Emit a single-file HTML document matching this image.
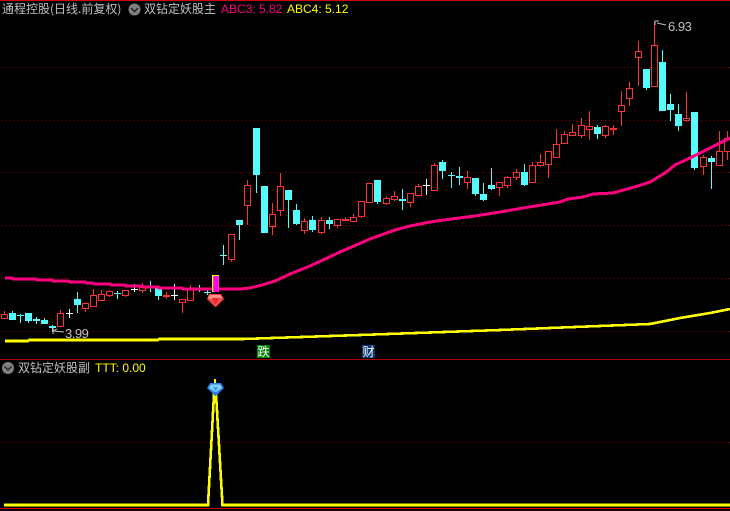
<!DOCTYPE html>
<html>
<head>
<meta charset="utf-8">
<style>
html,body{margin:0;padding:0;background:#000;}
#r{position:relative;width:730px;height:511px;background:#000;overflow:hidden;font:12px/14px "Liberation Sans","WenQuanYi Zen Hei","Noto Sans CJK SC",sans-serif;color:#c0c0c0;}
#r span{position:absolute;white-space:nowrap;}
svg{position:absolute;left:0;top:0;}
.c{font-family:"WenQuanYi Zen Hei","Noto Sans CJK SC",sans-serif;}
.n{font-size:13px;letter-spacing:-.5px;}
</style>
</head>
<body>
<div id="r">
<svg width="730" height="511" viewBox="0 0 730 511">
<g shape-rendering="crispEdges">
<rect x="0" y="0" width="730" height="1" fill="#c80000"/>
<rect x="0" y="359" width="730" height="1" fill="#a80000"/>
<g stroke="#960000" stroke-width="1" stroke-dasharray="1 3" fill="none">
<path d="M1 67.5H730M1 120.5H730M1 172.5H730M1 225.5H730M1 278.5H730M1 331.5H730M1 442.5H730"/>
</g>
<path fill="none" stroke="#ff3232" stroke-width="1" d="
M1.5 314.5h6v4h-6zM4.5 311V314
M57.5 313.5h6v13h-6zM60.5 310V313
M82.5 303.5h6v5h-6zM85.5 308V312
M90.5 295.5h6v11h-6zM93.5 289V295
M98.5 294.5h6v6h-6zM101.5 290V294
M106.5 291.5h6v4h-6zM109.5 290V291M109.5 295V297
M122.5 290.5h6v5h-6zM125.5 295V297
M139.5 287.5h6v3h-6zM142.5 283V287M142.5 290V293
M179.5 299.5h6v3h-6zM182.5 302V313
M187.5 288.5h6v12h-6zM190.5 285V288
M228.5 234.5h6v25h-6zM231.5 259V262
M244.5 185.5h6v20h-6zM247.5 180V185M247.5 205V225
M269.5 214.5h6v12h-6zM272.5 203V214M272.5 226V235
M277.5 186.5h6v24h-6zM280.5 173V186M280.5 210V216
M301.5 221.5h6v9h-6zM304.5 218V221M304.5 230V234
M318.5 220.5h6v12h-6zM321.5 217V220M321.5 232V234
M334.5 219.5h6v6h-6zM337.5 225V228
M350.5 217.5h6v4h-6zM353.5 214V217M353.5 221V222
M358.5 201.5h6v15h-6zM361.5 216V218
M366.5 183.5h6v19h-6z
M383.5 198.5h6v5h-6zM386.5 196V198M386.5 203V205
M391.5 196.5h6v3h-6zM394.5 191V196M394.5 199V201
M407.5 193.5h6v9h-6zM410.5 202V207
M415.5 186.5h6v9h-6zM418.5 184V186
M431.5 165.5h6v25h-6zM434.5 163V165
M464.5 177.5h6v5h-6zM467.5 171V177M467.5 182V189
M496.5 182.5h6v5h-6zM499.5 187V196
M504.5 177.5h6v8h-6zM507.5 176V177M507.5 185V188
M513.5 172.5h6v5h-6zM516.5 169V172M516.5 177V180
M529.5 165.5h6v17h-6zM532.5 162V165
M537.5 162.5h6v3h-6zM540.5 154V162M540.5 165V167
M545.5 151.5h6v13h-6zM548.5 164V178
M553.5 144.5h6v13h-6zM556.5 129V144M556.5 157V158
M561.5 134.5h6v9h-6zM564.5 131V134M564.5 143V144
M569.5 132.5h6v3h-6zM572.5 124V132
M578.5 125.5h6v10h-6zM581.5 118V125M581.5 135V138
M586.5 126.5h6v3h-6zM589.5 111V126M589.5 129V140
M602.5 126.5h6v9h-6zM605.5 125V126M605.5 135V138
M618.5 105.5h6v6h-6zM621.5 91V105M621.5 111V126
M626.5 88.5h6v10h-6zM629.5 82V88M629.5 98V106
M635.5 51.5h6v6h-6zM638.5 41V51M638.5 57V86
M651.5 45.5h6v41h-6zM654.5 22V45
M683.5 118.5h6v2h-6zM686.5 92V118M686.5 120V122
M700.5 157.5h6v9h-6zM703.5 155V157M703.5 166V175
M716.5 151.5h6v14h-6zM719.5 131V151
M724.5 138.5h6v13h-6zM727.5 131V138M727.5 151V160"/>
<path fill="#ff3232" d="M163 295h7v2h-7zM166 292h1v7h-1zM342 219h7v2h-7zM345 217h1v3h-1zM610 128h7v2h-7zM613 125h1v10h-1z"/>
<path fill="#54fcfc" d="
M9 313h7v7h-7zM12 311h1v9h-1z
M25 313h7v8h-7zM28 321h1v2h-1z
M33 319h7v2h-7zM36 317h1v7h-1z
M41 320h7v4h-7zM44 318h1v2h-1z
M49 326h7v2h-7zM52 325h1v7h-1z
M74 299h7v6h-7zM77 292h1v21h-1z
M155 288h7v8h-7zM158 296h1v4h-1z
M236 220h7v5h-7zM239 225h1v15h-1z
M253 128h7v47h-7zM256 175h1v18h-1z
M261 186h7v47h-7z
M285 190h7v10h-7zM288 200h1v28h-1z
M293 210h7v14h-7zM296 204h1v21h-1z
M309 220h7v10h-7zM312 216h1v16h-1z
M326 220h7v4h-7zM329 217h1v12h-1z
M374 180h7v22h-7zM377 202h1v2h-1z
M399 199h7v2h-7zM402 189h1v21h-1z
M439 162h7v9h-7zM442 160h1v19h-1z
M456 176h7v2h-7zM459 167h1v18h-1z
M472 178h7v16h-7zM475 194h1v2h-1z
M480 194h7v6h-7zM483 183h1v18h-1z
M488 185h7v4h-7zM491 168h1v22h-1z
M521 172h7v13h-7zM524 164h1v22h-1z
M594 127h7v7h-7zM597 125h1v14h-1z
M643 69h7v19h-7zM646 88h1v2h-1z
M659 62h7v49h-7zM662 50h1v12h-1z
M667 104h7v6h-7zM670 94h1v27h-1z
M675 114h7v12h-7zM678 104h1v27h-1z
M691 112h7v56h-7zM694 168h1v2h-1z
M708 158h7v4h-7zM711 156h1v33h-1z
M17 315h7v1h-7zM20 314h1v9h-1z
M114 293h7v1h-7zM117 291h1v8h-1z
M147 287h7v1h-7zM150 281h1v11h-1z
M196 288h7v1h-7zM199 285h1v7h-1z
M204 292h7v1h-7zM207 289h1v6h-1z
M220 255h7v1h-7zM223 245h1v20h-1z
M448 175h7v1h-7zM451 172h1v16h-1z"/>
<path fill="#ffffff" d="
M66 313h7v1h-7zM69 309h1v9h-1z
M131 289h7v1h-7zM134 284h1v8h-1z
M171 295h7v1h-7zM174 284h1v16h-1z
M423 185h7v1h-7zM426 179h1v16h-1z"/>
<polyline fill="none" stroke="#ff0080" stroke-width="3" points="5,278 12,278 13,279 36,279 37,280 52,280 53,281 68,281 70,282 85,282 86,283 93,283 94,284 110,284 111,285 125,285 126,286 142,286 143,287 158,287 159,288 182,288 183,289 240,289 250,288 262,285 275,281 290,274 310,266 340,252 370,239 395,230 410,226 430,222 451,219 475,216 500,212 523,208 560,202 568,199 583,197 593,194 613,193 638,186 650,182 665,173 675,165 690,158 710,148 730,138"/>
<polyline fill="none" stroke="#ffff00" stroke-width="2.6" points="5,341 28,341 29,340 158,340 159,339 243,339 360,335 500,330 600,326 650,324 665,321 680,318 710,313 730,309"/>
<rect x="212" y="275" width="7" height="17" fill="#ffff00"/>
<rect x="213" y="276" width="6" height="16" fill="#ff40a0"/>
<rect x="214" y="276" width="4" height="16" fill="#ff00ff"/>
<rect x="257" y="345" width="13" height="13" fill="#008000"/>
<rect x="362" y="345" width="13" height="13" fill="#0c3a70"/>
<rect x="0" y="508" width="730" height="1" fill="#d00000"/>
<polyline fill="none" stroke="#ffff00" stroke-width="2.6" points="4,505 208,505 214.500,385 215.500,385 222.500,505 730,505"/>
<rect x="214" y="379" width="2" height="4" fill="#ffff00"/>
</g>
<polygon points="209,294 221,294 224,299 216,307 215,307 207,299" fill="#f04848"/>
<polygon points="210,295 220,295 222,298 210,299 208,298" fill="#ff9090"/>
<polygon points="212,298 219,298 216,304 215,304" fill="#e02c2c"/>
<polygon points="210,383 221,383 224,388 216,396 215,396 207,388" fill="#2f80e0"/>
<polygon points="211,384.500 220,384.500 222,388 216,392 215,392 209,388" fill="#80d4f8"/>
<polygon points="213,387 218,387 216,391 215,391" fill="#3aa0ec"/>
<circle cx="134.500" cy="9.500" r="6" fill="#7f7f7f"/>
<path d="M131 8l3.500 3.500L138 8" fill="none" stroke="#222" stroke-width="1.400"/>
<circle cx="8" cy="368" r="6" fill="#7f7f7f"/>
<path d="M4.500 366.500l3.500 3.500 3.500-3.500" fill="none" stroke="#222" stroke-width="1.400"/>
<path d="M53 328V334M53 331L64 332M53 331L57 329" fill="none" stroke="#c0c0c0" stroke-width="1"/>
<path d="M655 25V21H659M657 23L666 25" fill="none" stroke="#c0c0c0" stroke-width="1"/>
</svg>
<span class="c" style="left:2px;top:2px;">通程控股(日线.前复权)</span>
<span class="c" style="left:144px;top:2px;">双钻定妖股主</span>
<span style="left:221px;top:2px;color:#ff0080;">ABC3: 5.82</span>
<span style="left:287px;top:2px;color:#ffff00;">ABC4: 5.12</span>
<span class="c" style="left:18px;top:361px;">双钻定妖股副</span>
<span style="left:95px;top:361px;color:#ffff00;">TTT: 0.00</span>
<span class="n" style="left:65px;top:327px;">3.99</span>
<span class="n" style="left:668px;top:20px;">6.93</span>
<span class="c" style="left:257px;top:345px;color:#fff;width:13px;text-align:center;">跌</span>
<span class="c" style="left:362px;top:345px;color:#fff;width:13px;text-align:center;">财</span>
</div>
</body>
</html>
